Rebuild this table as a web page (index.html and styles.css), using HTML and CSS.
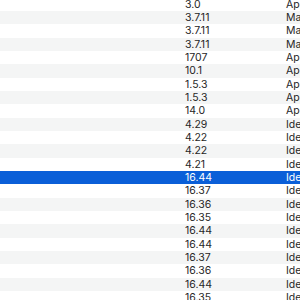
FILE: index.html
```html
<!DOCTYPE html>
<html>
<head>
<meta charset="utf-8">
<link rel="stylesheet" href="styles.css">
</head>
<body>
<div class="table">
  <div class="row"><span class="ver">3.0</span><span class="kind">Application</span></div>
  <div class="row"><span class="ver">3.7.11</span><span class="kind">Mac</span></div>
  <div class="row"><span class="ver">3.7.11</span><span class="kind">Mac</span></div>
  <div class="row"><span class="ver">3.7.11</span><span class="kind">Mac</span></div>
  <div class="row"><span class="ver">1707</span><span class="kind">Application</span></div>
  <div class="row"><span class="ver">10.1</span><span class="kind">Application</span></div>
  <div class="row"><span class="ver">1.5.3</span><span class="kind">Application</span></div>
  <div class="row"><span class="ver">1.5.3</span><span class="kind">Application</span></div>
  <div class="row"><span class="ver">14.0</span><span class="kind">Application</span></div>
  <div class="row"><span class="ver">4.29</span><span class="kind">Identifier</span></div>
  <div class="row"><span class="ver">4.22</span><span class="kind">Identifier</span></div>
  <div class="row"><span class="ver">4.22</span><span class="kind">Identifier</span></div>
  <div class="row"><span class="ver">4.21</span><span class="kind">Identifier</span></div>
  <div class="row selected"><span class="ver">16.44</span><span class="kind">Identifier</span></div>
  <div class="row"><span class="ver">16.37</span><span class="kind">Identifier</span></div>
  <div class="row"><span class="ver">16.36</span><span class="kind">Identifier</span></div>
  <div class="row"><span class="ver">16.35</span><span class="kind">Identifier</span></div>
  <div class="row"><span class="ver">16.44</span><span class="kind">Identifier</span></div>
  <div class="row"><span class="ver">16.44</span><span class="kind">Identifier</span></div>
  <div class="row"><span class="ver">16.37</span><span class="kind">Identifier</span></div>
  <div class="row"><span class="ver">16.36</span><span class="kind">Identifier</span></div>
  <div class="row"><span class="ver">16.44</span><span class="kind">Identifier</span></div>
  <div class="row"><span class="ver">16.35</span><span class="kind">Identifier</span></div>
</div>
</body>
</html>
```

FILE: styles.css
```css
html, body {
  margin: 0;
  padding: 0;
  background: #ffffff;
  overflow: hidden;
}
body {
  width: 300px;
  height: 300px;
  font-family: Inter, "Liberation Sans", sans-serif;
  font-size: 10.5px;
  color: #262626;
}
.table {
  margin-top: -2.333px;
  display: flex;
  flex-direction: column;
}
.row {
  height: 13.333px;
  display: flex;
  align-items: center;
  white-space: nowrap;
  overflow: hidden;
}
.row:nth-child(even) {
  background: #f4f5f5;
}
.row.selected {
  background: #0a5fd8;
  color: #ffffff;
}
.ver {
  margin-left: 185px;
  width: 101px;
  flex: none;
}
.kind {
  flex: none;
}
```
